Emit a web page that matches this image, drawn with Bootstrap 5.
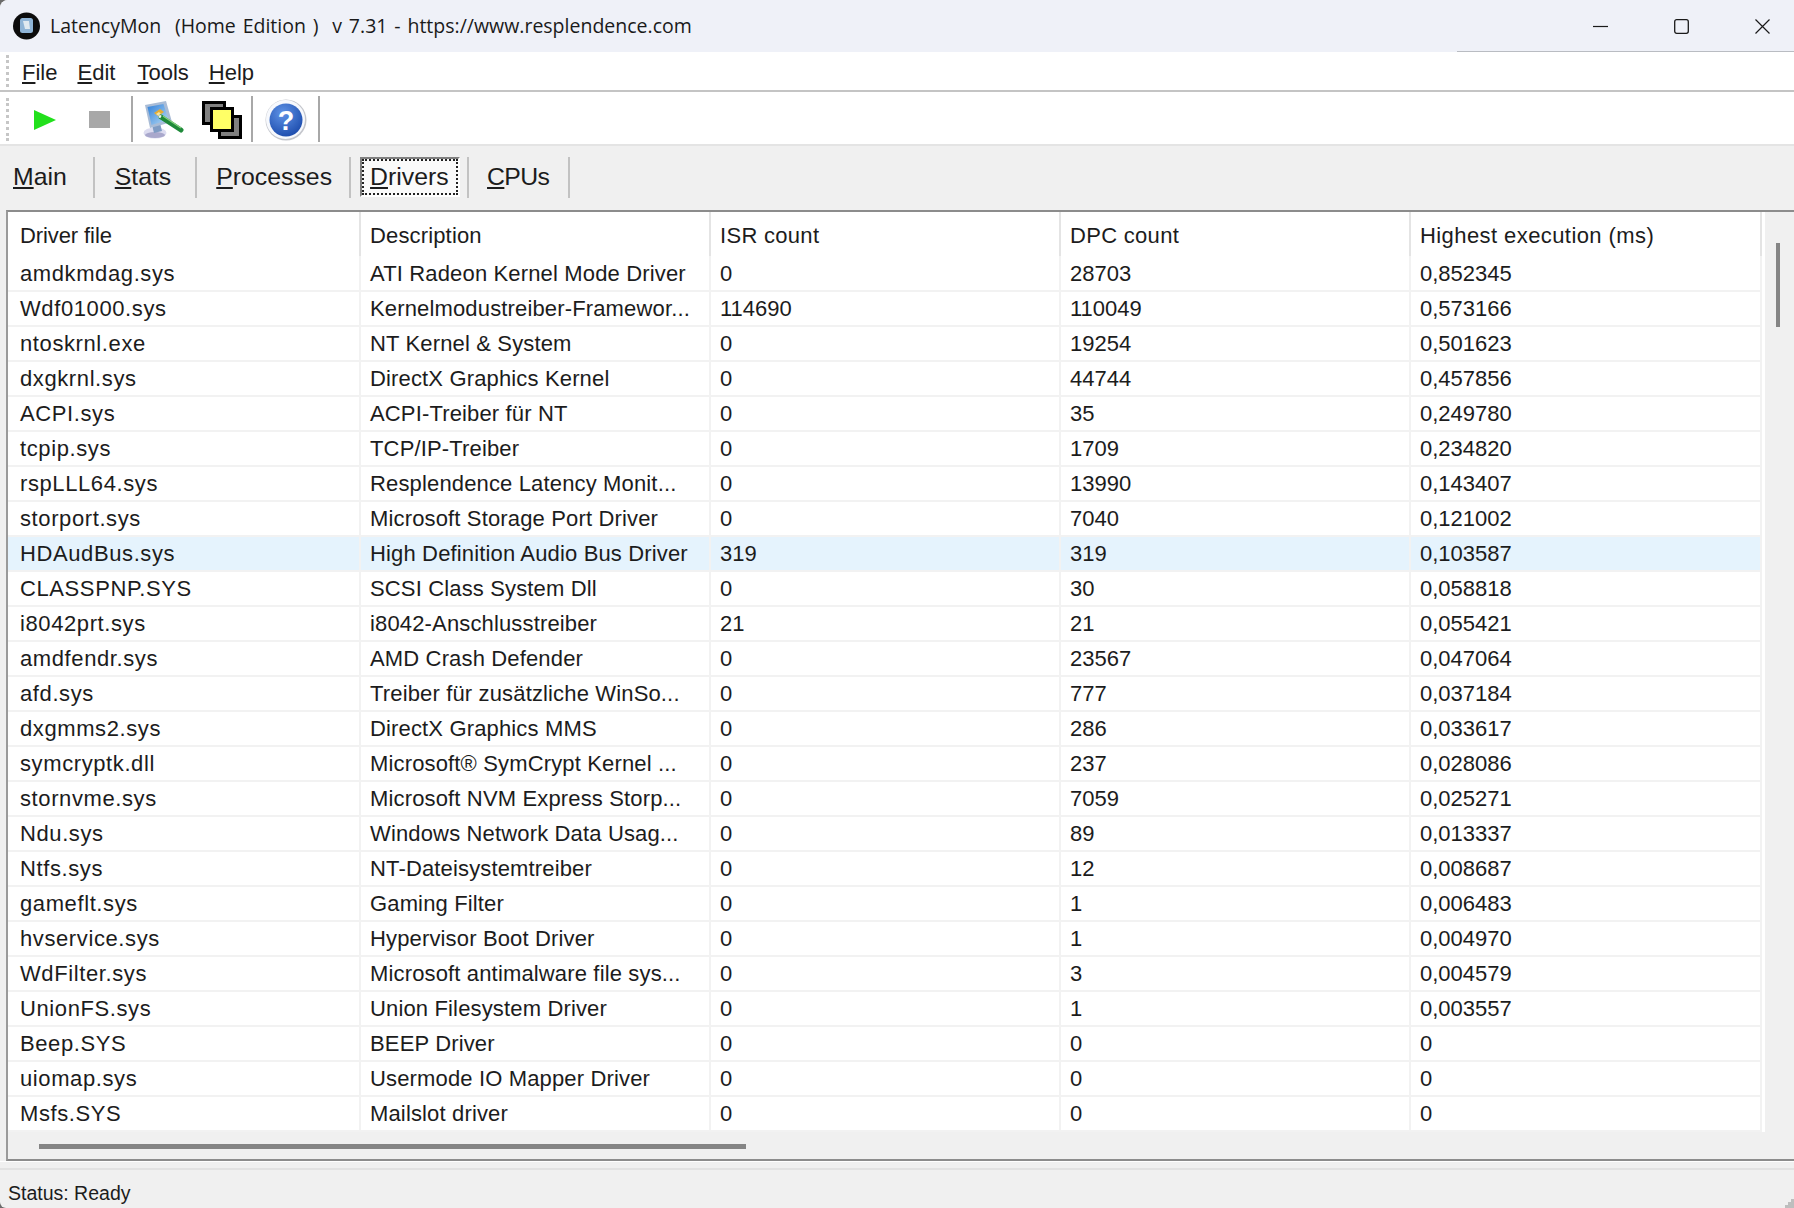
<!DOCTYPE html>
<html lang="en">
<head>
<meta charset="utf-8">
<title>LatencyMon</title>
<link href="https://cdn.jsdelivr.net/npm/bootstrap@5.3.0/dist/css/bootstrap.min.css" rel="stylesheet">
<style>
html,body{height:1208px;overflow:hidden}
body{background:#6b6b6b;color:#1c1c1c;font-family:"Liberation Sans",Arial,sans-serif}
.app-shell{height:1208px;background:#f0f0f0;border-radius:8px 0 0 6px;overflow:hidden}
.win-title{height:52px;background:#eff1f8;position:relative;font-family:"Open Sans",sans-serif;font-size:19.5px;word-spacing:1.8px;color:#1a1a1a;padding-left:13px;gap:10px}
.win-title::after{content:"";position:absolute;left:1457px;right:0;bottom:0;height:1px;background:#b9bcc2}
.win-ctrl{gap:66px;padding-right:24px}
.menu-strip{height:40px;background:#fff;border-bottom:2px solid #c4c4c4;padding-left:6px;font-size:22px}
.grip{width:3px;align-self:stretch;border-left:3px dotted #c6c6c6;margin:3px 0}
.menu-strip .grip{margin-right:13px}
.menu-item{margin:3px 20px 0 0;color:#1c1c1c;text-decoration:none;line-height:1}
.menu-edit{margin-right:22px}
.tool-strip{height:54px;background:#fff;border-bottom:2px solid #e4e4e4;padding:3px 0 0 6px}
.tool-cell{display:flex;align-items:center;justify-content:center}
.tool-play{width:71px;padding-left:1px}
.tool-stop{width:38px}
.tool-pad{width:13px}
.tool-pen{width:61px;padding-top:1px}
.tool-wins{width:57px;padding-right:2px;padding-top:1px}
.tool-help{width:65px;padding-top:1px}
.tool-sep{width:2px;height:46px;background:#a8a8a8;margin-top:-1px}
.tab-strip{height:64px;background:#f0f0f0;padding-top:11px;font-size:24.8px;align-items:flex-start}
.tab-item{height:41px;display:flex;align-items:center;border-right:2px solid #c2c2c2;color:#1c1c1c;text-decoration:none;line-height:1}
.tab-main{padding:0 26px 0 13px}
.tab-stats{padding:0 24px 0 20px}
.tab-procs{padding:0 17px 0 19px}
.tab-cpus{border-left:2px solid #c2c2c2;padding:0 19px 0 18px;letter-spacing:-.6px}
.tab-active{height:40px;padding:0 8px;margin:0 7px 0 9px;width:100px;border-top:2px solid #808080;border-left:2px solid #808080;border-bottom:2px solid #fff;border-right:2px solid #fff;background:#fafafa;outline:2px dotted #222;outline-offset:-4px;color:#1c1c1c;text-decoration:none;display:flex;align-items:center;line-height:1}
.frame-box{height:951px;margin-left:6px;border-top:2px solid #8c8c8c;border-bottom:2px solid #8c8c8c;border-left:2px solid #9a9a9a;background:#fff}
.grid-area{width:1757px}
.data-grid{table-layout:fixed;width:1753px;margin:0;font-size:22px;--bs-table-bg:transparent;--bs-table-color:#1c1c1c}
.data-grid th,.data-grid td{font-weight:400;padding:0 0 0 9px;white-space:nowrap;overflow:hidden;vertical-align:middle;line-height:1;border-left:0;border-right:2px solid #f2f2f2}
.data-grid th{height:44px;border-bottom:0;border-right-color:#e4e4e4;padding-top:4px}
.data-grid td{height:35px;border-bottom:2px solid #f2f2f2;padding-top:1px}
.data-grid th:first-child,.data-grid td:first-child{padding-left:12px}
.data-grid td:first-child{letter-spacing:.6px}
.data-grid td:nth-child(2){letter-spacing:.15px}
.data-grid th:first-child{letter-spacing:-.1px}
.data-grid th:nth-child(2){letter-spacing:.15px}
.data-grid th:nth-child(3),.data-grid th:nth-child(4){letter-spacing:.3px}
.data-grid th:nth-child(5){letter-spacing:.42px}
.data-grid tr.row-sel td{background:#e5f3fd}
.h-track{background:#f0f0f0;width:1757px;padding:12px 0 0 31px}
.h-thumb{width:707px;height:5px;background:#858585}
.v-track{background:#f0f0f0;flex:1;padding:31px 0 0 11px}
.v-thumb{width:4px;height:84px;background:#858585}
.gap-strip{height:7px;background:#f0f0f0;border-top:1px solid #fff}
.status-strip{height:40px;border-top:2px solid #e2e2e2;padding:10px 0 0 8px;font-size:19.5px;color:#1c1c1c}
u{text-underline-offset:2px}
</style>
</head>
<body>
<div class="app-shell d-flex flex-column">
  <div class="win-title d-flex align-items-center">
    <svg width="27" height="28" viewBox="0 0 27 28"><circle cx="13.5" cy="14" r="13.5" fill="#0c0c0c"/><rect x="7" y="6" width="13" height="15" rx="2.5" fill="#8fb4d6"/><path d="M10 9h6l1 8h-5z" fill="#dfe9f0"/></svg>
    <span class="flex-grow-1">LatencyMon&nbsp; (Home Edition )&nbsp; v 7.31 - https://www.resplendence.com</span>
    <div class="win-ctrl d-flex align-items-center">
      <svg width="15" height="15" viewBox="0 0 15 15"><path d="M0 7.5h15" stroke="#1a1a1a" stroke-width="1.2"/></svg>
      <svg width="15" height="15" viewBox="0 0 15 15"><rect x=".7" y=".7" width="13.6" height="13.6" rx="2" fill="none" stroke="#1a1a1a" stroke-width="1.3"/></svg>
      <svg width="15" height="15" viewBox="0 0 15 15"><path d="M.5.5l14 14M14.5.5l-14 14" stroke="#1a1a1a" stroke-width="1.2"/></svg>
    </div>
  </div>

  <nav class="menu-strip d-flex align-items-center">
    <span class="grip"></span>
    <a class="menu-item" href="#"><u>F</u>ile</a>
    <a class="menu-item menu-edit" href="#"><u>E</u>dit</a>
    <a class="menu-item" href="#"><u>T</u>ools</a>
    <a class="menu-item" href="#"><u>H</u>elp</a>
  </nav>

  <div class="tool-strip d-flex align-items-center">
    <span class="grip"></span>
    <div class="tool-cell tool-play"><svg width="22" height="20" viewBox="0 0 22 20"><path d="M0 0l22 10L0 20z" fill="#22e01c"/></svg></div>
    <div class="tool-cell tool-stop"><svg width="21" height="17" viewBox="0 0 21 17"><rect width="21" height="17" fill="#a8a8a8"/></svg></div>
    <div class="tool-cell tool-pad"></div>
    <span class="tool-sep"></span>
    <div class="tool-cell tool-pen"><svg width="41" height="38" viewBox="0 0 41 38">
      <defs><linearGradient id="scr" x1="0" y1="0" x2="1" y2="1"><stop offset="0" stop-color="#2f7fd8"/><stop offset="1" stop-color="#b9dcf5"/></linearGradient></defs>
      <ellipse cx="12" cy="32" rx="11.5" ry="5.5" fill="#dcdcf0"/><ellipse cx="12" cy="34" rx="10" ry="3" fill="#a9a8cc"/><path d="M9 24l8-2 2 8-8 2z" fill="#7f9cc4"/>
      <path d="M2 4L23 0l6 21-22 6z" fill="#a9bcd6"/><path d="M4.500 6l16-3 5 16-17 5z" fill="url(#scr)"/>
      <path d="M11 12l6-4 4 3-6 4z" fill="#e6ad33"/><path d="M13 13l3-2 3 3-2 2z" fill="#f4e3a6"/>
      <path d="M18 16L38 29" stroke="#1f8a3a" stroke-width="5" stroke-linecap="round"/><path d="M20 15L38 27" stroke="#86d07c" stroke-width="1.400"/><path d="M18 16l-2-1" stroke="#f2f2f2" stroke-width="3"/>
    </svg></div>
    <div class="tool-cell tool-wins"><svg width="40" height="38" viewBox="0 0 40 38">
      <rect x="1.500" y="1.500" width="21" height="21" fill="#808080" stroke="#000" stroke-width="3"/>
      <rect x="17.500" y="15.500" width="21" height="21" fill="#808080" stroke="#000" stroke-width="3"/>
      <rect x="9.500" y="7.500" width="21" height="22" fill="#ffff66" stroke="#000" stroke-width="3"/>
    </svg></div>
    <span class="tool-sep"></span>
    <div class="tool-cell tool-help"><svg width="42" height="42" viewBox="0 0 42 42">
      <defs><radialGradient id="hb" cx=".4" cy=".3" r=".8"><stop offset="0" stop-color="#5f93e6"/><stop offset="1" stop-color="#1746a8"/></radialGradient></defs>
      <circle cx="21" cy="21" r="20.500" fill="#c4c6cc"/><circle cx="20.500" cy="20.500" r="19.500" fill="#f7f9fd"/><circle cx="21" cy="21" r="16.500" fill="url(#hb)"/>
      <text x="21" y="30.500" text-anchor="middle" font-family="Liberation Sans" font-weight="700" font-size="27" fill="#fff">?</text>
    </svg></div>
    <span class="tool-sep"></span>
  </div>

  <div class="tab-strip d-flex">
    <a class="tab-item tab-main" href="#"><u>M</u>ain</a>
    <a class="tab-item tab-stats" href="#"><u>S</u>tats</a>
    <a class="tab-item tab-procs" href="#"><u>P</u>rocesses</a>
    <a class="tab-active" href="#"><u>D</u>rivers</a>
    <a class="tab-item tab-cpus" href="#"><u>C</u>PUs</a>
  </div>

  <div class="frame-box d-flex">
    <div class="grid-area d-flex flex-column">
      <table class="table data-grid">
        <colgroup><col style="width:352px"><col style="width:350px"><col style="width:350px"><col style="width:350px"><col style="width:351px"></colgroup>
        <thead><tr><th>Driver file</th><th>Description</th><th>ISR count</th><th>DPC count</th><th>Highest execution (ms)</th></tr></thead>
        <tbody>
          <tr><td>amdkmdag.sys</td><td>ATI Radeon Kernel Mode Driver</td><td>0</td><td>28703</td><td>0,852345</td></tr>
          <tr><td>Wdf01000.sys</td><td>Kernelmodustreiber-Framewor...</td><td>114690</td><td>110049</td><td>0,573166</td></tr>
          <tr><td>ntoskrnl.exe</td><td>NT Kernel &amp; System</td><td>0</td><td>19254</td><td>0,501623</td></tr>
          <tr><td>dxgkrnl.sys</td><td>DirectX Graphics Kernel</td><td>0</td><td>44744</td><td>0,457856</td></tr>
          <tr><td>ACPI.sys</td><td>ACPI-Treiber für NT</td><td>0</td><td>35</td><td>0,249780</td></tr>
          <tr><td>tcpip.sys</td><td>TCP/IP-Treiber</td><td>0</td><td>1709</td><td>0,234820</td></tr>
          <tr><td>rspLLL64.sys</td><td>Resplendence Latency Monit...</td><td>0</td><td>13990</td><td>0,143407</td></tr>
          <tr><td>storport.sys</td><td>Microsoft Storage Port Driver</td><td>0</td><td>7040</td><td>0,121002</td></tr>
          <tr class="row-sel"><td>HDAudBus.sys</td><td>High Definition Audio Bus Driver</td><td>319</td><td>319</td><td>0,103587</td></tr>
          <tr><td>CLASSPNP.SYS</td><td>SCSI Class System Dll</td><td>0</td><td>30</td><td>0,058818</td></tr>
          <tr><td>i8042prt.sys</td><td>i8042-Anschlusstreiber</td><td>21</td><td>21</td><td>0,055421</td></tr>
          <tr><td>amdfendr.sys</td><td>AMD Crash Defender</td><td>0</td><td>23567</td><td>0,047064</td></tr>
          <tr><td>afd.sys</td><td>Treiber für zusätzliche WinSo...</td><td>0</td><td>777</td><td>0,037184</td></tr>
          <tr><td>dxgmms2.sys</td><td>DirectX Graphics MMS</td><td>0</td><td>286</td><td>0,033617</td></tr>
          <tr><td>symcryptk.dll</td><td>Microsoft® SymCrypt Kernel ...</td><td>0</td><td>237</td><td>0,028086</td></tr>
          <tr><td>stornvme.sys</td><td>Microsoft NVM Express Storp...</td><td>0</td><td>7059</td><td>0,025271</td></tr>
          <tr><td>Ndu.sys</td><td>Windows Network Data Usag...</td><td>0</td><td>89</td><td>0,013337</td></tr>
          <tr><td>Ntfs.sys</td><td>NT-Dateisystemtreiber</td><td>0</td><td>12</td><td>0,008687</td></tr>
          <tr><td>gameflt.sys</td><td>Gaming Filter</td><td>0</td><td>1</td><td>0,006483</td></tr>
          <tr><td>hvservice.sys</td><td>Hypervisor Boot Driver</td><td>0</td><td>1</td><td>0,004970</td></tr>
          <tr><td>WdFilter.sys</td><td>Microsoft antimalware file sys...</td><td>0</td><td>3</td><td>0,004579</td></tr>
          <tr><td>UnionFS.sys</td><td>Union Filesystem Driver</td><td>0</td><td>1</td><td>0,003557</td></tr>
          <tr><td>Beep.SYS</td><td>BEEP Driver</td><td>0</td><td>0</td><td>0</td></tr>
          <tr><td>uiomap.sys</td><td>Usermode IO Mapper Driver</td><td>0</td><td>0</td><td>0</td></tr>
          <tr><td>Msfs.SYS</td><td>Mailslot driver</td><td>0</td><td>0</td><td>0</td></tr>
        </tbody>
      </table>
      <div class="h-track flex-grow-1"><div class="h-thumb"></div></div>
    </div>
    <div class="v-track"><div class="v-thumb"></div></div>
  </div>
  <div class="gap-strip"></div>
  <div class="status-strip d-flex align-items-center justify-content-between">
    <span>Status: Ready</span>
    <svg class="align-self-end" width="10" height="10" viewBox="0 0 10 10"><path d="M7 1h3v3H7zM4 4h3v3H4zM7 4h3v3H7zM1 7h3v3H1zM4 7h3v3H4zM7 7h3v3H7z" fill="#a8a8a8" opacity=".7"/></svg>
  </div>
</div>
</body>
</html>
